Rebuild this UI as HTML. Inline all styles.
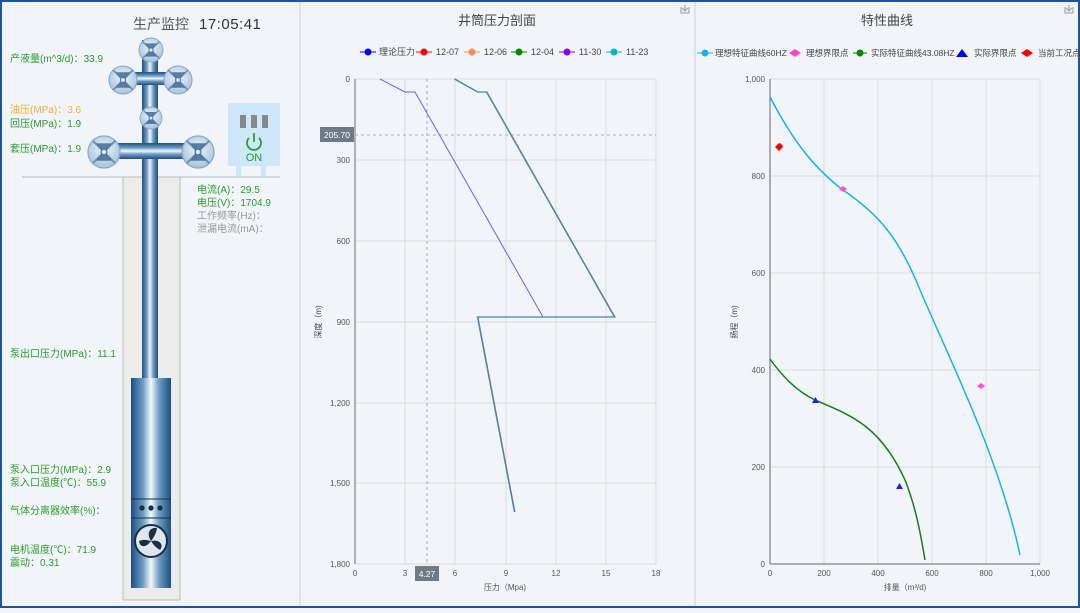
<!DOCTYPE html>
<html><head><meta charset="utf-8">
<style>
body{margin:0;width:1080px;height:608px;overflow:hidden;background:#f1f5f9;font-family:"Liberation Sans","Noto Sans CJK SC",sans-serif;}
svg text{font-family:"Liberation Sans","Noto Sans CJK SC",sans-serif;}
</style></head><body>
<svg width="1080" height="608" viewBox="0 0 1080 608" xmlns="http://www.w3.org/2000/svg">
<defs>
<linearGradient id="pipe" x1="0" x2="1" y1="0" y2="0">
<stop offset="0" stop-color="#1d4f7e"/><stop offset="0.3" stop-color="#6f9cc4"/><stop offset="0.5" stop-color="#f4f8fc"/><stop offset="0.7" stop-color="#6f9cc4"/><stop offset="1" stop-color="#1d4f7e"/></linearGradient>
<linearGradient id="pipeh" x1="0" x2="0" y1="0" y2="1">
<stop offset="0" stop-color="#1d4f7e"/><stop offset="0.3" stop-color="#6f9cc4"/><stop offset="0.5" stop-color="#f4f8fc"/><stop offset="0.7" stop-color="#6f9cc4"/><stop offset="1" stop-color="#1d4f7e"/></linearGradient>
<radialGradient id="vg" cx="0.5" cy="0.4" r="0.6"><stop offset="0" stop-color="#eef4fa"/><stop offset="1" stop-color="#a9c3db"/></radialGradient>
<g id="valve"><circle r="1" fill="url(#vg)" stroke="#8aa9c6" stroke-width="0.08"/><path d="M-0.7,-0.7 L0.7,0.7 M0.7,-0.7 L-0.7,0.7" stroke="#6c8eb0" stroke-width="0.12"/><path d="M-0.5,0.55 L0.5,0.55 L0,0 Z M-0.5,-0.55 L0.5,-0.55 L0,0Z" fill="#2b5c8a" opacity="0.75"/><circle r="0.18" fill="#dce8f3" stroke="#4a72a0" stroke-width="0.08"/></g>
</defs>
<rect x="0" y="0" width="1080" height="608" fill="#f1f5f9"/>
<rect x="1" y="1" width="1078" height="606" fill="none" stroke="#1b55a0" stroke-width="2"/>
<line x1="300" y1="2" x2="300" y2="606" stroke="#c8d2dc"/>
<line x1="695" y1="2" x2="695" y2="606" stroke="#c8d2dc"/>

<!-- LEFT PANEL -->
<text x="133" y="29" font-size="14" fill="#555">生产监控</text>
<text x="199" y="29" font-size="15" fill="#333" letter-spacing="0.5">17:05:41</text>
<rect x="123" y="177" width="57" height="423" fill="#ececec" stroke="#bbb"/>
<line x1="22" y1="177" x2="280" y2="177" stroke="#bbb"/>
<rect x="142" y="40" width="16" height="340" fill="url(#pipe)"/>
<rect x="112" y="72" width="76" height="13" fill="url(#pipeh)"/>
<rect x="100" y="143" width="100" height="16" fill="url(#pipeh)"/>
<use href="#valve" transform="translate(151,50) scale(12)"/>
<use href="#valve" transform="translate(123,80) scale(14)"/>
<use href="#valve" transform="translate(178,80) scale(14)"/>
<use href="#valve" transform="translate(151,118) scale(11)"/>
<use href="#valve" transform="translate(104,152) scale(16)"/>
<use href="#valve" transform="translate(198,152) scale(16)"/>
<rect x="131" y="378" width="40" height="210" fill="url(#pipe)"/>
<line x1="131" y1="499" x2="171" y2="499" stroke="#1a2e44"/>
<line x1="131" y1="518" x2="171" y2="518" stroke="#1a2e44"/>
<circle cx="142" cy="508" r="2.6" fill="#1a2e44"/><circle cx="151" cy="508" r="2.6" fill="#1a2e44"/><circle cx="160" cy="508" r="2.6" fill="#1a2e44"/>
<circle cx="151" cy="541" r="16" fill="#dfe6ee" stroke="#1a2e44" stroke-width="2"/>
<path d="M151,541 C146,533 150,527 157,528 C156,534 154,537 151,541 M151,541 C160,539 164,545 160,550 C155,547 153,544 151,541 M151,541 C146,548 140,548 139,541 C144,539 147,540 151,541" fill="#1a2e44"/>
<rect x="228" y="103" width="52" height="63" fill="#cde7fb"/>
<rect x="236" y="166" width="5" height="10" fill="#cde7fb"/><rect x="261" y="166" width="5" height="10" fill="#cde7fb"/>
<rect x="240" y="115" width="6" height="13" fill="#888"/><rect x="251" y="115" width="6" height="13" fill="#888"/><rect x="262" y="115" width="6" height="13" fill="#888"/>
<path d="M249,138 A7,7 0 1 0 259,138" fill="none" stroke="#2aa02a" stroke-width="1.8"/><line x1="254" y1="133" x2="254" y2="142" stroke="#2aa02a" stroke-width="1.8"/>
<text x="254" y="161" font-size="11" fill="#2a9a2a" text-anchor="middle">ON</text>
<g font-size="10" fill="#2e9a2e">
<text x="10" y="62">产液量(m^3/d)：33.9</text>
<text x="10" y="113" fill="#f0b030">油压(MPa)：3.6</text>
<text x="10" y="127">回压(MPa)：1.9</text>
<text x="10" y="152">套压(MPa)：1.9</text>
<text x="197" y="193">电流(A)：29.5</text>
<text x="197" y="206">电压(V)：1704.9</text>
<text x="197" y="219" fill="#999">工作频率(Hz)：</text>
<text x="197" y="232" fill="#999">泄漏电流(mA)：</text>
<text x="10" y="357">泵出口压力(MPa)：11.1</text>
<text x="10" y="473">泵入口压力(MPa)：2.9</text>
<text x="10" y="486">泵入口温度(℃)：55.9</text>
<text x="10" y="514">气体分离器效率(%)：</text>
<text x="10" y="553">电机温度(℃)：71.9</text>
<text x="10" y="566">震动：0.31</text>
</g>

<!-- CHART 1 -->
<text x="497" y="25" font-size="13" fill="#444" text-anchor="middle">井筒压力剖面</text>
<path d="M681,7v6h8v-6 M685,5v6 M682,8l3,3 3,-3" fill="none" stroke="#999"/>
<g font-size="9" fill="#444">
<line x1="360" y1="52" x2="376" y2="52" stroke="#00f"/><circle cx="368" cy="52" r="3.5" fill="#00f"/><text x="379" y="55">理论压力</text>
<line x1="416" y1="52" x2="432" y2="52" stroke="#f00"/><circle cx="424" cy="52" r="3.5" fill="#f00"/><text x="436" y="55">12-07</text>
<line x1="464" y1="52" x2="480" y2="52" stroke="#f98b4e"/><circle cx="472" cy="52" r="3.5" fill="#f98b4e"/><text x="484" y="55">12-06</text>
<line x1="511" y1="52" x2="527" y2="52" stroke="#080"/><circle cx="519" cy="52" r="3.5" fill="#080"/><text x="531" y="55">12-04</text>
<line x1="559" y1="52" x2="575" y2="52" stroke="#80f"/><circle cx="567" cy="52" r="3.5" fill="#80f"/><text x="579" y="55">11-30</text>
<line x1="606" y1="52" x2="622" y2="52" stroke="#0bb"/><circle cx="614" cy="52" r="3.5" fill="#0bb"/><text x="626" y="55">11-23</text>
</g>
<g stroke="#dcdcdc">
<line x1="405" y1="79" x2="405" y2="564"/><line x1="455" y1="79" x2="455" y2="564"/><line x1="506" y1="79" x2="506" y2="564"/><line x1="556" y1="79" x2="556" y2="564"/><line x1="606" y1="79" x2="606" y2="564"/><line x1="656" y1="79" x2="656" y2="564"/>
<line x1="355" y1="79" x2="656" y2="79"/><line x1="355" y1="160" x2="656" y2="160"/><line x1="355" y1="241" x2="656" y2="241"/><line x1="355" y1="322" x2="656" y2="322"/><line x1="355" y1="403" x2="656" y2="403"/><line x1="355" y1="483" x2="656" y2="483"/><line x1="355" y1="564" x2="656" y2="564"/>
</g>
<line x1="355" y1="79" x2="355" y2="564" stroke="#999" stroke-width="1.5"/>
<line x1="427" y1="79" x2="427" y2="564" stroke="#aaa" stroke-dasharray="3,3"/>
<line x1="355" y1="135" x2="656" y2="135" stroke="#aaa" stroke-dasharray="3,3"/>
<polyline points="380,79 405,92 415,92 543,317" fill="none" stroke="#6a5cff"/>
<polyline points="455,79 478,92 487,92 615,317 478,317 515,512" fill="none" stroke="#e05050" stroke-width="1"/>
<polyline points="455,79 478,92 487,92 615,317 478,317 515,512" fill="none" stroke="#3a8cb8" stroke-width="1.3" transform="translate(-0.5,0)"/>
<g font-size="8" fill="#555" text-anchor="end">
<text x="350" y="82">0</text><text x="350" y="163">300</text><text x="350" y="244">600</text><text x="350" y="325">900</text><text x="350" y="406">1,200</text><text x="350" y="486">1,500</text><text x="350" y="567">1,800</text></g>
<g font-size="8" fill="#555" text-anchor="middle">
<text x="355" y="576">0</text><text x="405" y="576">3</text><text x="455" y="576">6</text><text x="506" y="576">9</text><text x="556" y="576">12</text><text x="606" y="576">15</text><text x="656" y="576">18</text>
<text x="505" y="590">压力（Mpa)</text></g>
<text transform="translate(321,322) rotate(-90)" font-size="8" fill="#444" text-anchor="middle">深度（m)</text>
<rect x="320" y="127" width="34" height="15" fill="#6e7a86"/><text x="337" y="138" font-size="8.5" fill="#fff" text-anchor="middle">205.70</text>
<rect x="415" y="566" width="24" height="15" fill="#6e7a86"/><text x="427" y="577" font-size="8.5" fill="#fff" text-anchor="middle">4.27</text>

<!-- CHART 2 -->
<text x="887" y="25" font-size="13" fill="#444" text-anchor="middle">特性曲线</text>
<path d="M1065,7v6h8v-6 M1069,5v6 M1066,8l3,3 3,-3" fill="none" stroke="#999"/>
<g font-size="8.5" fill="#444">
<line x1="697" y1="53" x2="713" y2="53" stroke="#1ab0f0"/><circle cx="705" cy="53" r="3.5" fill="#1ab0f0"/><text x="715" y="56">理想特征曲线60HZ</text>
<path d="M789,53 l6,-4 6,4 -6,4z" fill="#ff44cc"/><text x="806" y="56">理想界限点</text>
<line x1="853" y1="53" x2="867" y2="53" stroke="#080"/><circle cx="860" cy="53" r="3.5" fill="#080"/><text x="871" y="56">实际特征曲线43.08HZ</text>
<path d="M956,57 l6,-8 6,8z" fill="#00e"/><text x="974" y="56">实际界限点</text>
<path d="M1021,53 l6,-4 6,4 -6,4z" fill="#f00"/><text x="1038" y="56">当前工况点</text>
</g>
<g stroke="#dcdcdc">
<line x1="824" y1="79" x2="824" y2="564"/><line x1="878" y1="79" x2="878" y2="564"/><line x1="932" y1="79" x2="932" y2="564"/><line x1="986" y1="79" x2="986" y2="564"/><line x1="1040" y1="79" x2="1040" y2="564"/>
<line x1="770" y1="79" x2="1040" y2="79"/><line x1="770" y1="176" x2="1040" y2="176"/><line x1="770" y1="273" x2="1040" y2="273"/><line x1="770" y1="370" x2="1040" y2="370"/><line x1="770" y1="467" x2="1040" y2="467"/>
</g>
<line x1="770" y1="79" x2="770" y2="564" stroke="#666"/>
<line x1="770" y1="564" x2="1040" y2="564" stroke="#666"/>
<path d="M770,97 C790,135 810,165 843,190 C880,215 900,240 920,290 C950,360 1000,460 1020,555" fill="none" stroke="#1ab0f0" stroke-width="1.5"/>
<path d="M770,359 C785,380 800,393 815,400 C850,415 880,425 905,480 C915,505 920,530 925,560" fill="none" stroke="#1a7a1a" stroke-width="1.5"/>
<path d="M775,147 l4,-4 4,4 -4,4z" fill="#f00"/><path d="M777,146 l3,-3 3,3 -3,3z" fill="#f00"/>
<path d="M839,189 l4,-3 4,3 -4,3z" fill="#ff55cc"/>
<path d="M977,386 l4,-3 4,3 -4,3z" fill="#ff55cc"/>
<path d="M812,403 l3.5,-6 3.5,6z" fill="#22d"/>
<path d="M896,489 l3.5,-6 3.5,6z" fill="#22d"/>
<g font-size="8" fill="#555" text-anchor="end">
<text x="765" y="82">1,000</text><text x="765" y="179">800</text><text x="765" y="276">600</text><text x="765" y="373">400</text><text x="765" y="470">200</text><text x="765" y="567">0</text></g>
<g font-size="8" fill="#555" text-anchor="middle">
<text x="770" y="576">0</text><text x="824" y="576">200</text><text x="878" y="576">400</text><text x="932" y="576">600</text><text x="986" y="576">800</text><text x="1040" y="576">1,000</text>
<text x="905" y="590">排量（m³/d)</text></g>
<text transform="translate(737,322) rotate(-90)" font-size="8" fill="#444" text-anchor="middle">扬程（m)</text>
</svg>
</body></html>
